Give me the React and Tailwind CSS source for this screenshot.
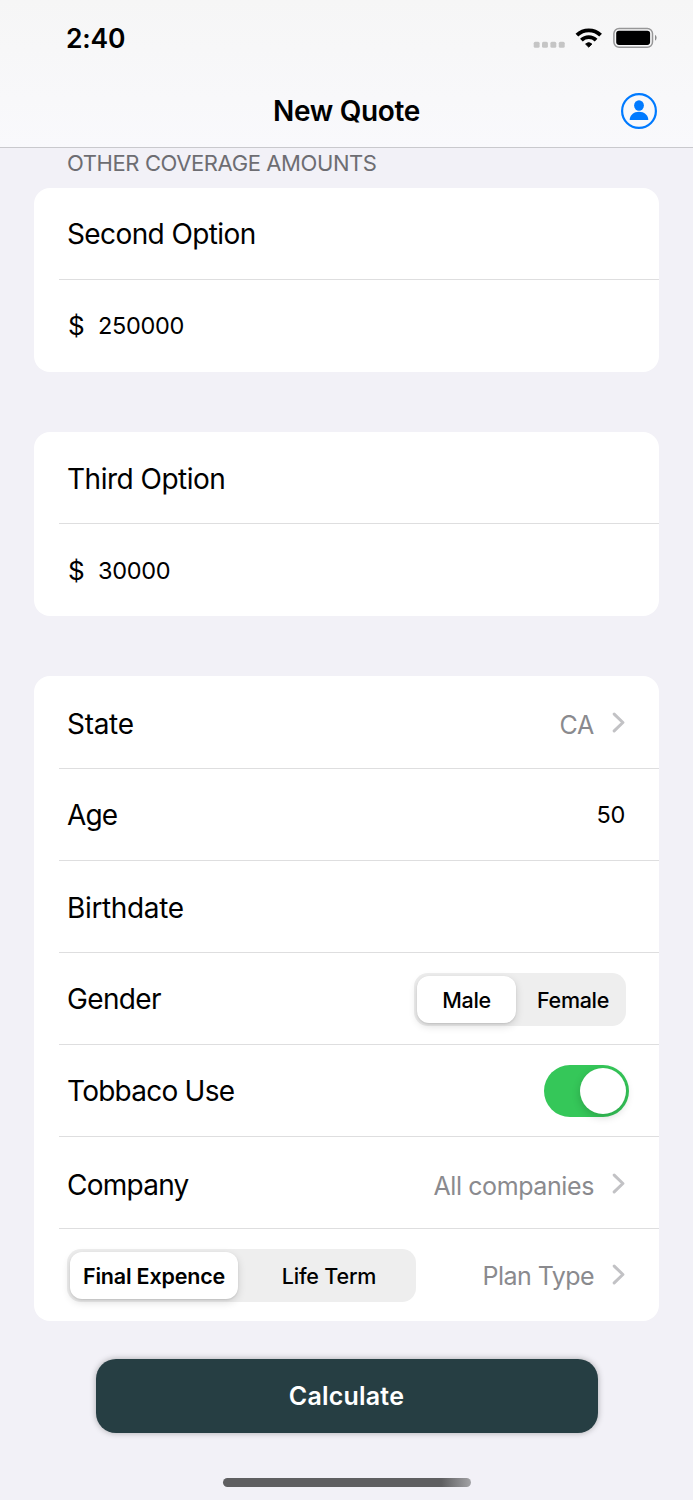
import React from "react";

function StatusIcons() {
  return (
    <svg width="126" height="24" viewBox="532 26 126 24" className="block">
      {[533.7, 542, 550.4, 558.8].map((x) => (
        <rect key={x} x={x} y="41.8" width="5.9" height="6" rx="1.5" fill="#c5c5c5" />
      ))}
      <g fill="none" stroke="#000" strokeWidth="3.9">
        <path d="M576.9 35.2a17 17 0 0 1 23.7 0" />
        <path d="M581.4 40.1a10.6 10.6 0 0 1 14.7 0" />
      </g>
      <path
        d="M588.75 47.2l3.2-3.1a4.7 4.7 0 0 0-6.4 0z"
        fill="#000"
        stroke="#000"
        strokeWidth="0.8"
        strokeLinejoin="round"
      />
      <rect x="613.9" y="28.4" width="38.6" height="18.8" rx="5.2" fill="none" stroke="#979798" strokeWidth="1.5" />
      <rect x="616.2" y="30.8" width="33.9" height="14.1" rx="2.8" fill="#000" />
      <path d="M655 34.8a3.6 3.6 0 0 1 0 6z" fill="#8c8c8d" />
    </svg>
  );
}

function ProfileIcon() {
  return (
    <svg width="36" height="36" viewBox="0 0 36 36" className="block">
      <circle cx="18" cy="18" r="16.9" fill="none" stroke="#007aff" strokeWidth="2.2" />
      <ellipse cx="18" cy="12.5" rx="4.9" ry="5.2" fill="#007aff" />
      <path d="M8.7 26.4C8.9 22.2 12.8 18.7 18 18.7s9.1 3.5 9.3 7.7c0 .4-.2.6-.6.6H9.3c-.4 0-.6-.2-.6-.6z" fill="#007aff" />
    </svg>
  );
}

function Chevron() {
  return (
    <svg width="13" height="21" viewBox="0 0 13 21" className="mb-[3px] block">
      <path d="M2.2 2.1l8.7 8.4L2.2 18.9" fill="none" stroke="#c2c2c5" strokeWidth="3" strokeLinecap="round" strokeLinejoin="round" />
    </svg>
  );
}

function Card({ children, className }) {
  return <section className={"mx-[34px] rounded-[16px] bg-white pl-[25px] " + className}>{children}</section>;
}

function Row({ children, className = "h-[92px] border-b" }) {
  return (
    <div className={"flex items-center justify-between border-[#dededf] pr-[34px] pl-[8px] " + className}>
      {children}
    </div>
  );
}

function Label({ children, className = "" }) {
  return <span className={"text-[28px] leading-[34px] " + className}>{children}</span>;
}

function Amount({ value }) {
  return (
    <div className="flex items-center pl-px">
      <span className="w-[30px] text-[26px] leading-8">$</span>
      <span className="text-[23.5px] leading-8 tracking-[-0.3px]">{value}</span>
    </div>
  );
}

function Detail({ children, className = "" }) {
  return (
    <div className="flex items-center gap-[18px]">
      <span className={"text-[25px] leading-8 text-[#8a8a8e] " + className}>{children}</span>
      <Chevron />
    </div>
  );
}

export default function App() {
  return (
    <main className="flex h-[1500px] w-[693px] flex-col bg-[#f2f1f7] font-['Inter',sans-serif] text-black">
      <header className="h-[148px] border-b border-[#c9c9cd] bg-linear-to-b from-[#f6f6f6] to-[#f9f9fc]">
        <div className="flex h-[76px] items-center justify-between pr-[35px] pl-[66px]">
          <span className="text-[26.5px] leading-8 font-semibold tracking-[-0.2px]">2:40</span>
          <StatusIcons />
        </div>
        <div className="grid h-[70px] grid-cols-[1fr_auto_1fr] items-center pr-[36px]">
          <h1 className="col-start-2 ml-[36px] text-[28px] leading-[34px] font-semibold tracking-[-0.35px]">New Quote</h1>
          <div className="justify-self-end">
            <ProfileIcon />
          </div>
        </div>
      </header>

      <h2 className="flex h-[40px] items-center pb-[11px] pl-[67px] text-[22px] leading-7 tracking-[-0.4px] text-[#6d6d72]">
        OTHER COVERAGE AMOUNTS
      </h2>

      <Card className="h-[184px]">
        <Row className="h-[92px] border-b pt-px">
          <Label className="tracking-[-0.6px]">Second Option</Label>
        </Row>
        <Row className="h-[92px]">
          <Amount value="250000" />
        </Row>
      </Card>

      <Card className="mt-[60px] h-[184px]">
        <Row className="h-[92px] border-b pt-[2px]">
          <Label className="tracking-[-0.5px]">Third Option</Label>
        </Row>
        <Row className="h-[92px] pt-px">
          <Amount value="30000" />
        </Row>
      </Card>

      <Card className="mt-[60px] h-[645px]">
        <Row className="h-[93px] border-b pt-[3px]">
          <Label className="tracking-[-0.3px]">State</Label>
          <Detail className="pt-[2px] tracking-[-0.3px]">CA</Detail>
        </Row>
        <Row>
          <Label className="tracking-[-0.9px]">Age</Label>
          <span className="text-[23.5px] leading-8 tracking-[-0.3px]">50</span>
        </Row>
        <Row className="h-[92px] border-b pt-[3px]">
          <Label className="tracking-[-0.35px]">Birthdate</Label>
        </Row>
        <Row>
          <Label className="tracking-[-0.65px]">Gender</Label>
          <div className="mt-[2px] -mr-px flex h-[53px] w-[212px] rounded-[14px] bg-[#eeeeee] p-[3px] text-[21.5px] leading-7 tracking-[-0.3px]">
            <button className="flex w-[99px] items-center justify-center rounded-[12px] bg-white font-medium shadow-[0_3px_8px_rgba(0,0,0,0.14),0_1px_2px_rgba(0,0,0,0.1)]">
              Male
            </button>
            <button className="flex flex-1 items-center justify-center pl-[7px] font-medium">Female</button>
          </div>
        </Row>
        <Row>
          <Label className="tracking-[-0.75px]">Tobbaco Use</Label>
          <button
            role="switch"
            aria-checked="true"
            className="mr-[-4px] flex h-[52px] w-[85px] items-center justify-end rounded-full bg-[#35c759] p-[3px]"
          >
            <span className="size-[46px] rounded-full bg-white shadow-[0_3px_9px_rgba(0,0,0,0.18)]" />
          </button>
        </Row>
        <Row className="h-[92px] border-b pt-[4px]">
          <Label className="tracking-[-0.75px]">Company</Label>
          <Detail className="pt-[2px] tracking-[-0.4px]">All companies</Detail>
        </Row>
        <Row className="h-[92px]">
          <div className="flex h-[53px] w-[349px] rounded-[14px] bg-[#eeeeee] p-[3px] text-[21.5px] leading-7 tracking-[-0.2px]">
            <button className="flex w-[168px] items-center justify-center rounded-[12px] bg-white pt-px font-semibold shadow-[0_3px_8px_rgba(0,0,0,0.14),0_1px_2px_rgba(0,0,0,0.1)]">
              Final Expence
            </button>
            <button className="flex flex-1 items-center justify-center pt-px pl-[7px] font-medium">Life Term</button>
          </div>
          <div className="pt-[2px]">
            <Detail className="tracking-[-0.55px]">Plan Type</Detail>
          </div>
        </Row>
      </Card>

      <button className="mx-auto mt-[38px] flex h-[74px] w-[502px] items-center justify-center rounded-[20px] bg-[#263e43] text-[25px] leading-8 font-semibold tracking-[0.2px] text-white shadow-[0_0_6px_rgba(0,0,0,0.3)]">
        Calculate
      </button>

      <div className="mx-auto mt-[45px] h-[9px] w-[248px] rounded-full bg-linear-to-r from-[#5f5f61] from-88% to-[#a3a3a6]" />
    </main>
  );
}
